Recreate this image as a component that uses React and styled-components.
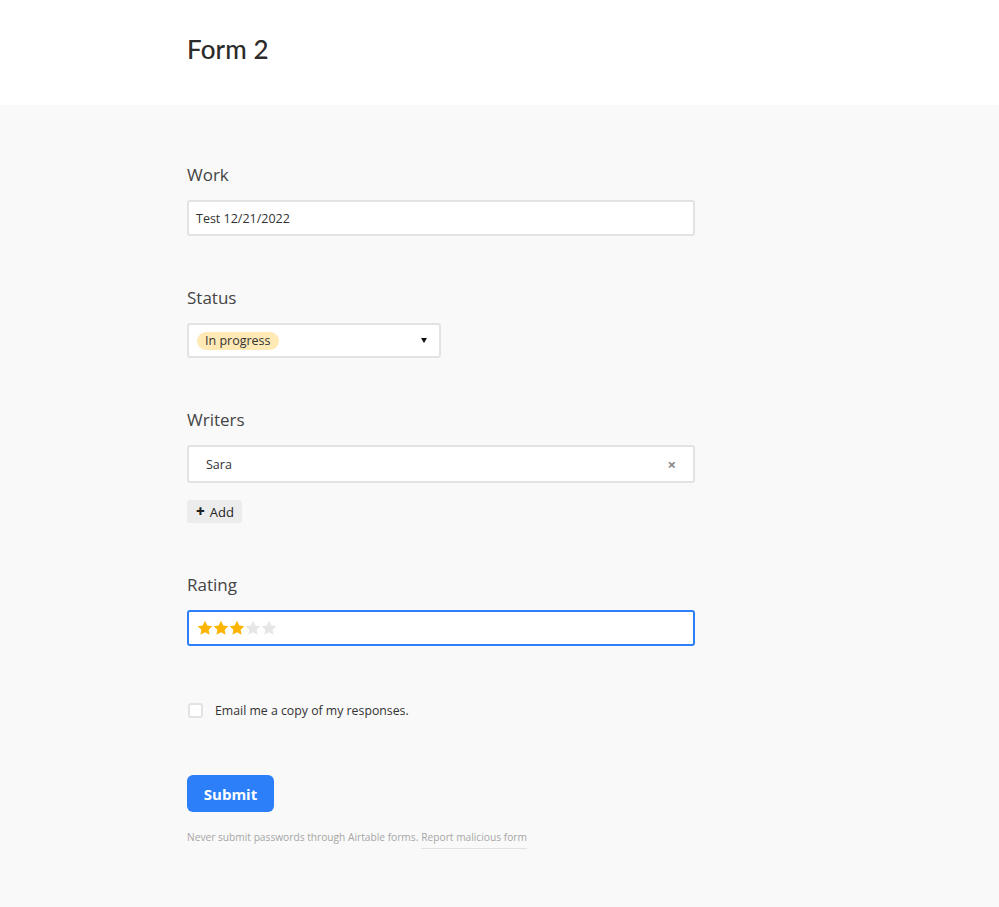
import React from "react";
import styled, { createGlobalStyle } from "styled-components";

const Global = createGlobalStyle`
  html, body { margin: 0; padding: 0; }
  body {
    background: #f9f9f9;
    font-family: "Open Sans", "Noto Sans", sans-serif;
    color: #333;
  }
`;

const Header = styled.header`
  background: #fff;
  height: 105px;
  display: flex;
  align-items: center;
  padding-left: 187px;
  box-sizing: border-box;
`;

const Title = styled.h1`
  margin: 0;
  margin-top: -8px;
  font-family: "Lato", "Open Sans", sans-serif;
  font-weight: 500;
  font-size: 26px;
  color: #2b2b2b;
  letter-spacing: 0.1px;
`;

const Main = styled.main`
  padding: 59px 0 60px 187px;
  display: flex;
  flex-direction: column;
  width: 508px;
`;

const Field = styled.section`
  display: flex;
  flex-direction: column;
  gap: 14px;
  margin-top: ${(p) => p.$mt || 0}px;
  margin-bottom: ${(p) => (p.$mb === undefined ? 51 : p.$mb)}px;
`;

const Label = styled.label`
  font-size: 17px;
  line-height: 22px;
  color: #444;
`;

const Box = styled.div`
  box-sizing: border-box;
  height: ${(p) => p.$h || 36}px;
  width: ${(p) => p.$w || 508}px;
  background: #fff;
  border: 2px solid ${(p) => (p.$focus ? "#2d7ff9" : "#e3e3e3")};
  border-radius: 3px;
  display: flex;
  align-items: center;
  padding: 0 ${(p) => p.$pr || 6}px 0 ${(p) => p.$pl || 6}px;
  font-size: 12.5px;
  color: #333;
`;

const Pill = styled.span`
  background: #ffeab6;
  border-radius: 9px;
  padding: 0 8px;
  height: 18px;
  line-height: 18px;
  font-size: 12.5px;
  color: #333;
`;

const Spacer = styled.span`
  flex: 1;
`;

const Caret = styled.span`
  width: 0;
  height: 0;
  border-left: 3.5px solid transparent;
  border-right: 3.5px solid transparent;
  border-top: 5px solid #111;
  margin-right: 6px;
`;

const Remove = styled.span`
  color: #888;
  font-size: 15px;
  font-weight: 700;
  line-height: 1;
`;

const AddButton = styled.button`
  align-self: flex-start;
  margin-top: 3px;
  height: 23px;
  padding: 0 8px 0 9px;
  border: none;
  border-radius: 3px;
  background: #ececec;
  font-family: inherit;
  font-size: 13px;
  color: #222;
  display: flex;
  align-items: center;
  gap: 5px;
`;

const Plus = styled.span`
  font-weight: 800;
  font-size: 15px;
  line-height: 1;
`;

const Stars = styled.div`
  display: flex;
`;

const CheckRow = styled.div`
  display: flex;
  align-items: center;
  gap: 12px;
  margin-top: 6px;
  margin-bottom: 56px;
  font-size: 12.3px;
  color: #333;
`;

const Checkbox = styled.span`
  box-sizing: border-box;
  width: 15px;
  height: 15px;
  margin-left: 1px;
  background: #fff;
  border: 2px solid #e3e3e3;
  border-radius: 3px;
`;

const Submit = styled.button`
  align-self: flex-start;
  width: 87px;
  height: 37px;
  background: #2d7ff9;
  color: #fff;
  border: none;
  border-radius: 6px;
  font-family: inherit;
  font-weight: 700;
  font-size: 15px;
`;

const Footer = styled.p`
  margin: 18px 0 0;
  font-size: 10.2px;
  color: #a6a6a6;
  display: flex;
  gap: 3px;
`;

const Report = styled.span`
  padding-bottom: 4px;
  border-bottom: 1px solid #e2e2e2;
`;

function Star({ on }) {
  return (
    <svg width="16" height="16" viewBox="0 0 24 24">
      <path
        d="M12 1.2l3.4 7 7.6 1-5.6 5.3 1.4 7.6L12 18.4l-6.8 3.7 1.4-7.6L1 9.2l7.6-1z"
        fill={on ? "#fcb400" : "#e6e6e6"}
      />
    </svg>
  );
}

export default function App() {
  return (
    <>
      <Global />
      <Header>
        <Title>Form 2</Title>
      </Header>
      <Main>
        <Field>
          <Label>Work</Label>
          <Box $pl={7}>Test 12/21/2022</Box>
        </Field>
        <Field>
          <Label>Status</Label>
          <Box $w={254} $h={35} $pl={8}>
            <Pill>In progress</Pill>
            <Spacer />
            <Caret />
          </Box>
        </Field>
        <Field $mb={0}>
          <Label>Writers</Label>
          <Box $h={38} $pl={17} $pr={17}>
            Sara
            <Spacer />
            <Remove>×</Remove>
          </Box>
          <AddButton>
            <Plus>+</Plus>Add
          </AddButton>
        </Field>
        <Field $mt={51} $mb={50}>
          <Label>Rating</Label>
          <Box $focus $pl={8}>
            <Stars>
              {[1, 2, 3, 4, 5].map((n) => (
                <Star key={n} on={n <= 3} />
              ))}
            </Stars>
          </Box>
        </Field>
        <CheckRow>
          <Checkbox />
          Email me a copy of my responses.
        </CheckRow>
        <Submit>Submit</Submit>
        <Footer>
          Never submit passwords through Airtable forms.
          <Report>Report malicious form</Report>
        </Footer>
      </Main>
    </>
  );
}
